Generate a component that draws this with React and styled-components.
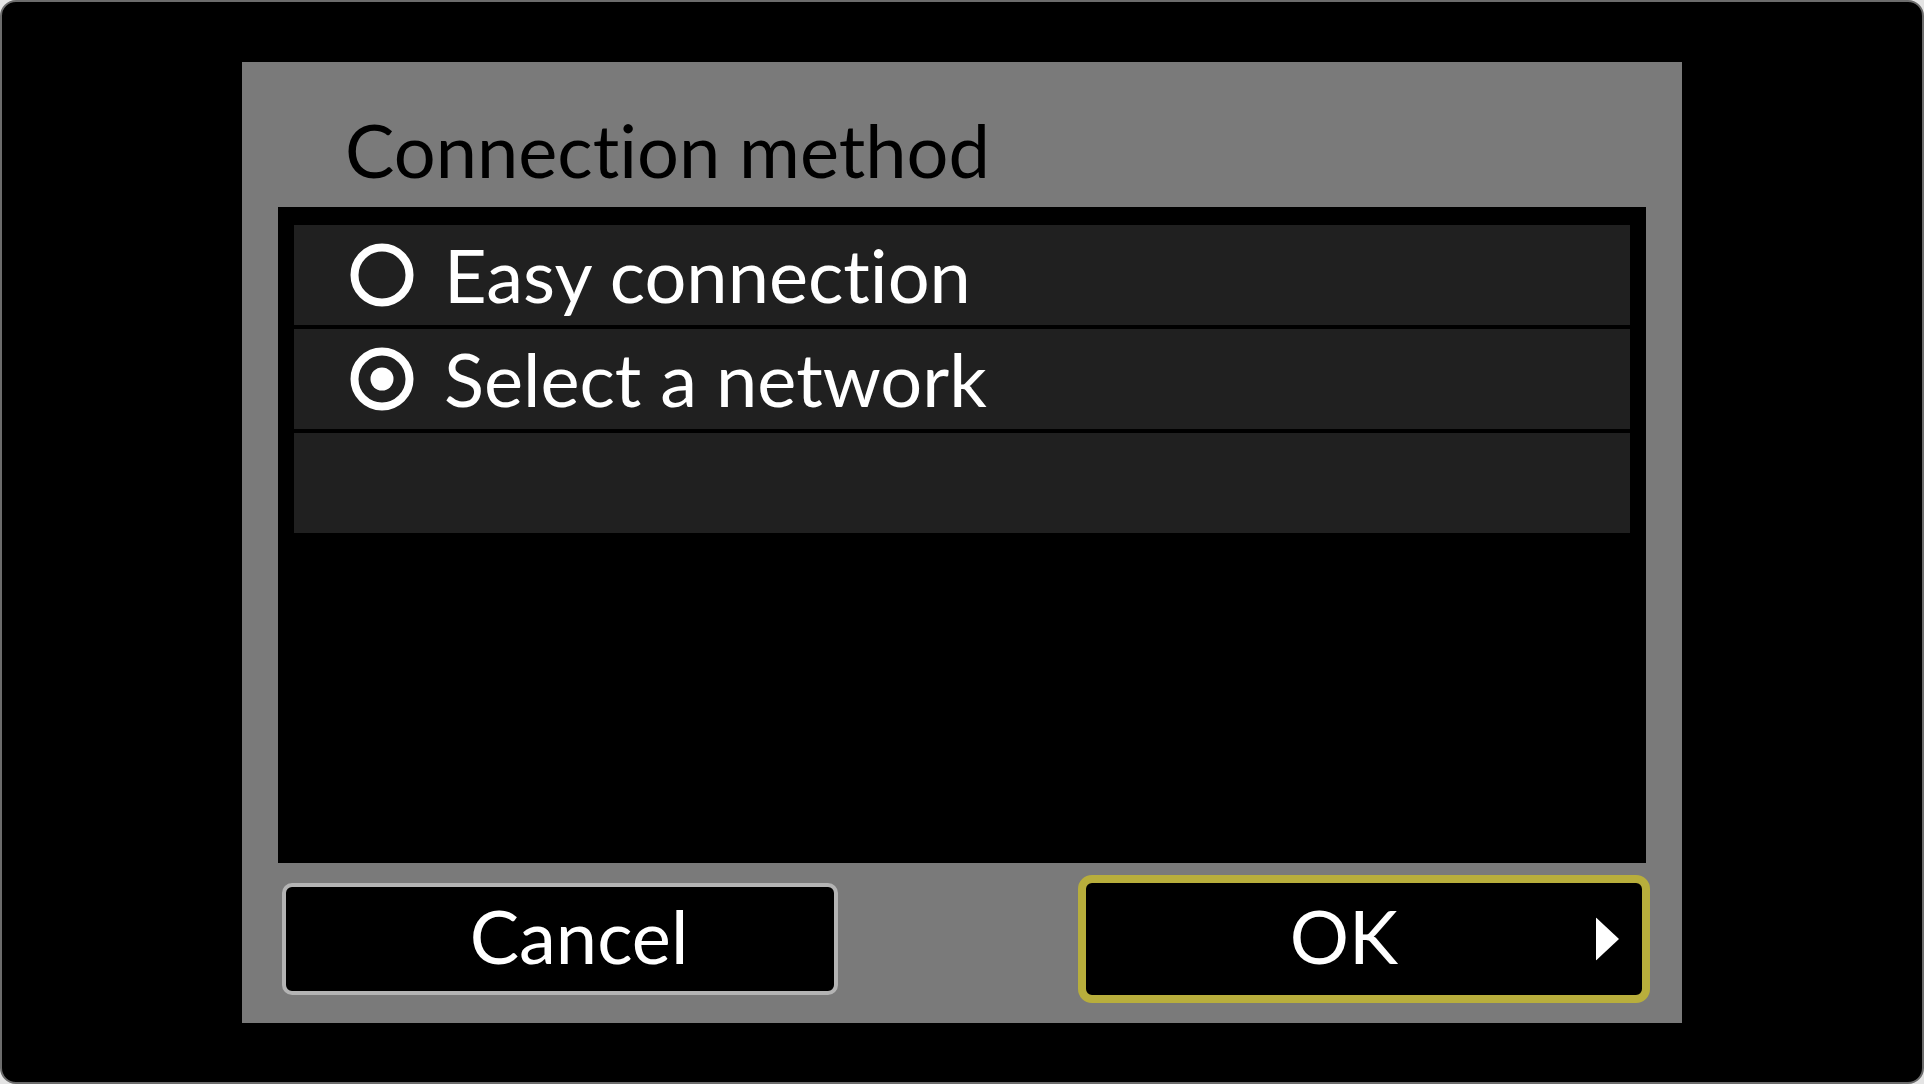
import styled, { createGlobalStyle } from 'styled-components';

const GlobalStyle = createGlobalStyle`
   * {
      box-sizing: border-box;
   }
   html, body {
      margin: 0;
      padding: 0;
      background-color: #e4e4e4;
   }
   body {
      font-family: Lato, "Open Sans", "Liberation Sans", sans-serif;
      font-variant-ligatures: none;
   }
`;

const ScreenStyle = styled.main`
   width: 1924px;
   height: 1084px;
   border: 2px solid #6c6c6c;
   border-radius: 16px;
   background-color: #000;
   display: flex;
   align-items: center;
   justify-content: center;
   overflow: hidden;
`;

const DialogStyle = styled.section`
   width: 1440px;
   height: 961px;
   background-color: #7a7a7a;
   padding: 0 36px;
   display: flex;
   flex-direction: column;
`;

const TitleStyle = styled.h1`
   height: 145px;
   margin: 0;
   padding: 44px 0 0 67px;
   font-size: 74px;
   line-height: 1.2;
   font-weight: 400;
   color: #000;
   white-space: nowrap;
`;

const ListStyle = styled.ul`
   height: 656px;
   margin: 0;
   padding: 18px 16px;
   list-style: none;
   background-color: #000;
   display: flex;
   flex-direction: column;
   gap: 4px;
`;

const RowStyle = styled.li`
   height: 100px;
   background-color: #202020;
   display: flex;
   align-items: center;
   gap: 30px;
   padding-left: 56px;
   font-size: 74px;
   color: #fff;
   white-space: nowrap;
`;

const ButtonBarStyle = styled.div`
   height: 160px;
   margin-right: -4px;
   padding: 0 0 8px 4px;
   display: flex;
   align-items: center;
   justify-content: space-between;
`;

const ButtonStyle = styled.button`
   position: relative;
   display: flex;
   align-items: center;
   justify-content: center;
   background-color: #000;
   color: #fff;
   font-family: inherit;
   font-size: 74px;
   line-height: 1;
   cursor: pointer;
   ${(props) =>
      props.$focused
         ? `width: 572px; height: 128px; border: 8px solid #b8ae3c; border-radius: 14px; padding: 0 40px 6px 0;`
         : `width: 556px; height: 112px; border: 4px solid #b4b4b4; border-radius: 10px; padding: 0 0 6px 38px;`}
`;

const ArrowStyle = styled.svg`
   position: absolute;
   right: 23px;
   top: 50%;
   transform: translateY(-50%);
`;

function Radio({ checked }) {
   return (
      <svg width="64" height="64" viewBox="0 0 64 64">
         <circle cx="32" cy="32" r="27.5" fill="none" stroke="#fff" strokeWidth="8" />
         {checked && <circle cx="32" cy="32" r="11.5" fill="#fff" />}
      </svg>
   );
}

const options = [
   { label: 'Easy connection', checked: false },
   { label: 'Select a network', checked: true },
   { label: '', checked: null },
];

function App() {
   return (
      <>
         <GlobalStyle />
         <ScreenStyle>
            <DialogStyle>
               <TitleStyle>Connection method</TitleStyle>
               <ListStyle>
                  {options.map((opt, i) => (
                     <RowStyle key={i}>
                        {opt.checked !== null && <Radio checked={opt.checked} />}
                        {opt.label}
                     </RowStyle>
                  ))}
               </ListStyle>
               <ButtonBarStyle>
                  <ButtonStyle>Cancel</ButtonStyle>
                  <ButtonStyle $focused>
                     OK
                     <ArrowStyle width="23" height="43" viewBox="0 0 23 43">
                        <polygon points="0,0 23,21.5 0,43" fill="#fff" />
                     </ArrowStyle>
                  </ButtonStyle>
               </ButtonBarStyle>
            </DialogStyle>
         </ScreenStyle>
      </>
   );
}

export default App;
